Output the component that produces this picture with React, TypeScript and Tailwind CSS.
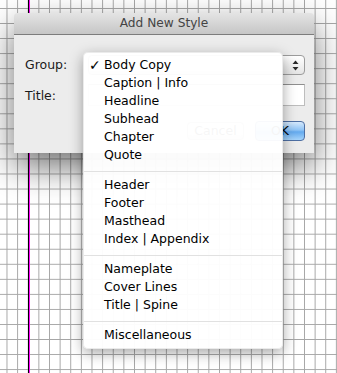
import React from "react";

const groups: string[][] = [
  ["Body Copy", "Caption | Info", "Headline", "Subhead", "Chapter", "Quote"],
  ["Header", "Footer", "Masthead", "Index | Appendix"],
  ["Nameplate", "Cover Lines", "Title | Spine"],
  ["Miscellaneous"],
];

function UpDown() {
  return (
    <svg width="7" height="11" viewBox="0 0 7 11">
      <path d="M3.5 0.5 L6.5 4 L0.5 4 Z" fill="#2a2a2a" />
      <path d="M3.5 10.5 L6.5 7 L0.5 7 Z" fill="#2a2a2a" />
    </svg>
  );
}

export default function App() {
  return (
    <div
      className="relative w-[337px] h-[373px] overflow-hidden bg-white bg-[linear-gradient(to_right,#a6a6a6_1px,transparent_1px),linear-gradient(to_bottom,#a6a6a6_1px,transparent_1px)] bg-[size:10.63px_15.05px] bg-[position:6.5px_8px]"
      style={{ fontFamily: '"DejaVu Sans", "Liberation Sans", sans-serif' }}
    >
      {/* guide line */}
      <div className="absolute left-[28px] top-0 h-full flex">
        <div className="w-px h-full bg-black" />
        <div className="w-px h-full bg-[#ff00ff]" />
      </div>

      {/* dialog sheet (window on the canvas) */}
      <div className="absolute left-[14px] top-[13px] w-[300px] h-[140px] rounded-t-[4px] bg-[#ececec] shadow-[0_14px_34px_rgba(0,0,0,0.55)] flex flex-col">
        <div className="h-[22px] shrink-0 rounded-t-[4px] bg-[linear-gradient(to_bottom,#e4e4e4,#c6c6c6)] border-b border-[#7c7c7c] flex items-center justify-center text-[12.2px] text-[#444]">
          Add New Style
        </div>
        <div className="flex flex-col pt-[20px] pl-[11px] pr-[9px] text-[12.5px] text-[#1a1a1a]">
          <div className="flex items-center h-[20px]">
            <div className="w-[63px]">Group:</div>
            <div className="flex-1 h-[20px] rounded-[4px] border border-[#9c9c9c] bg-[linear-gradient(to_bottom,#ffffff,#e4e4e4)] flex items-center justify-end pr-[5px]">
              <UpDown />
            </div>
          </div>
          <div className="flex items-center h-[22px] mt-[9px]">
            <div className="w-[63px] pt-[2px]">Title:</div>
            <div className="flex-1 h-[22px] bg-white border border-[#bdbdbd] border-t-[#8f8f8f]" />
          </div>
          <div className="flex justify-end items-center gap-[11px] mt-[15px]">
            <div className="w-[57px] h-[18px] rounded-[4px] border border-[#a5a5a5] bg-[linear-gradient(to_bottom,#ffffff,#e2e2e2)] flex items-center justify-center">
              Cancel
            </div>
            <div className="w-[50px] h-[20px] rounded-[4px] border border-[#4e6fa3] bg-[linear-gradient(to_bottom,#d6e9fc_0%,#8ec3f5_45%,#64aaee_55%,#a6d4fb_100%)] flex items-center justify-center text-black">
              OK
            </div>
          </div>
        </div>
      </div>

      {/* popup menu */}
      <div className="absolute left-[83px] top-[52px] w-[200px] pt-[3px] pb-[4px] rounded-[5px] bg-[rgba(255,255,255,0.96)] border border-[rgba(0,0,0,0.08)] shadow-[0_4px_14px_rgba(0,0,0,0.35)] text-[12.5px] text-black">
        {groups.map((g, gi) => (
          <div key={gi}>
            {gi > 0 && <div className="mt-[7px] mb-[4px] h-px bg-[#e1e1e1]" />}
            {g.map((item) => (
              <div key={item} className="flex h-[18px] items-center">
                <div className="w-[20px] pl-[5px] text-[14px] leading-none">
                  {item === "Body Copy" ? "✓" : ""}
                </div>
                <span className="leading-[18px]">{item}</span>
              </div>
            ))}
          </div>
        ))}
      </div>
    </div>
  );
}
